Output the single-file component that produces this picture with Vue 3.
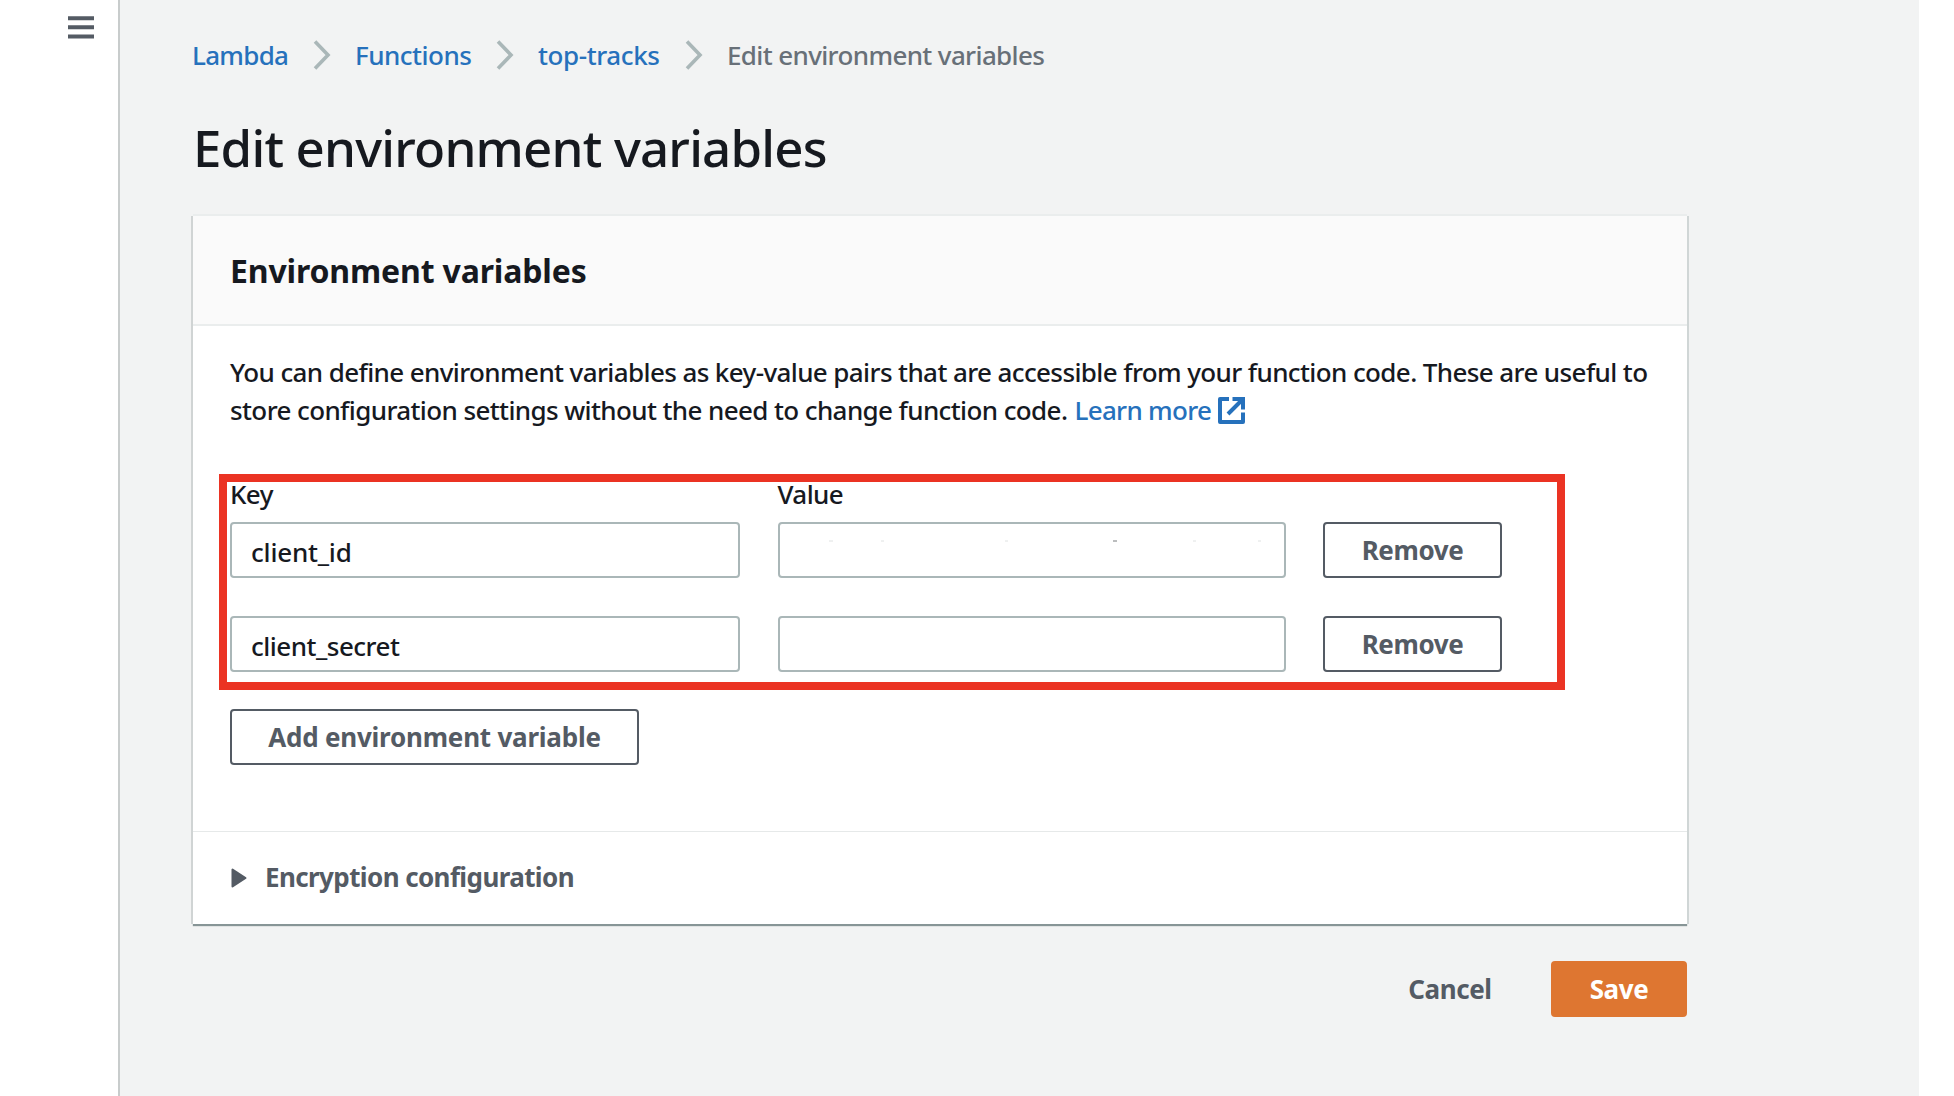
<script setup>
import { ref } from 'vue'

const crumbs = [
  { label: 'Lambda', width: 95, spacing: -0.7 },
  { label: 'Functions', width: 115, spacing: -0.5 },
  { label: 'top-tracks', width: 121, spacing: -0.4 },
]

const variables = ref([
  { key: 'client_id', value: '', spacing: -0.2 },
  { key: 'client_secret', value: '', spacing: -0.5 },
])
</script>

<template>
  <div class="page">
    <aside class="rail">
      <button class="menu" aria-label="Open navigation">
        <svg width="26" height="24" viewBox="0 0 26 24">
          <path d="M0 2.2h26M0 11.3h26M0 20.6h26" stroke="#545b64" stroke-width="4" />
        </svg>
      </button>
    </aside>

    <main class="content">
      <nav class="crumbs">
        <template v-for="crumb in crumbs" :key="crumb.label">
          <a class="crumb" :style="{ width: crumb.width + 'px', letterSpacing: crumb.spacing + 'px' }">{{ crumb.label }}</a>
          <svg class="chevron" width="18" height="32" viewBox="0 0 18 32">
            <path d="M2 2.5 15 16 2 29.5" fill="none" stroke="#aab7b8" stroke-width="3.6" />
          </svg>
        </template>
        <span class="crumb current">Edit environment variables</span>
      </nav>

      <h1>Edit environment variables</h1>

      <section class="card">
        <header class="card-head"><h2>Environment variables</h2></header>

        <div class="card-body">
          <p class="intro">
            You can define environment variables as key-value pairs that are accessible from your function code. These are useful to<br />
            store configuration settings without the need to change function code. <a class="learn">Learn more</a>
            <svg class="external" width="27" height="27" viewBox="0 0 27 27">
              <path d="M11 2H2v23h23v-9.5" fill="none" stroke="#2671bc" stroke-width="4" stroke-linejoin="round" />
              <path d="M14.5 2H25v10.5M24 3 10 17" fill="none" stroke="#2671bc" stroke-width="4" />
            </svg>
          </p>

          <div class="grid">
            <div class="outline"></div>
            <label>Key</label>
            <label>Value</label>
            <span></span>
            <template v-for="(item, i) in variables" :key="i">
              <input v-model="item.key" type="text" :style="{ letterSpacing: item.spacing + 'px' }" />
              <div class="field">
                <svg v-if="i === 0" width="504" height="52" viewBox="0 0 504 52">
                  <path d="M49 17h4M101 17h3M225 17h3M413 17h3M478 17h3" stroke="#dfe2e2" stroke-width="1" />
                  <path d="M333 17h4" stroke="#8d9093" stroke-width="1.2" />
                </svg>
              </div>
              <button class="btn">Remove</button>
            </template>
          </div>

          <button class="btn add">Add environment variable</button>
        </div>

        <footer class="card-foot">
          <svg width="16" height="20" viewBox="0 0 16 20">
            <path d="M1.5 1.5v17L14.5 10z" fill="#545b64" stroke="#545b64" stroke-width="2" stroke-linejoin="round" />
          </svg>
          <span>Encryption configuration</span>
        </footer>
      </section>

      <div class="actions">
        <button class="btn cancel">Cancel</button>
        <button class="btn save">Save</button>
      </div>
    </main>
  </div>
</template>

<style>
body {
  margin: 0;
  background: #fff;
}
</style>

<style scoped>
.page,
.page * {
  box-sizing: border-box;
}
.page {
  display: flex;
  width: 1954px;
  height: 1096px;
  overflow: hidden;
  font: 500 26px/37.3px "Noto Sans", sans-serif;
  color: #16191f;
}
.rail {
  flex: none;
  width: 120px;
  border-right: 2px solid #c8cccc;
  padding: 16px 0 0 68px;
}
.menu {
  display: block;
  padding: 0;
  border: 0;
  background: none;
}
.menu svg {
  display: block;
}
.content {
  width: 1799px;
  height: 1096px;
  background: #f2f3f3;
  padding: 36px 232px 0 73px;
}
.crumbs {
  display: flex;
  align-items: center;
  height: 38px;
  white-space: nowrap;
}
.crumb {
  margin-left: -1px;
  padding-top: 1px;
  color: #2671bc;
}
.chevron {
  flex: none;
  margin: 0 25px 0 26px;
}
.current {
  color: #687078;
  letter-spacing: -0.63px;
}
h1 {
  margin: 42px 0 0;
  height: 62px;
  font-size: 51px;
  font-weight: 500;
  line-height: 62px;
  letter-spacing: -0.8px;
  white-space: nowrap;
}
.card {
  width: 1494px;
  height: 708px;
  margin-top: 38px;
  background: #fff;
  box-shadow: 0 -2px 0 #eaeded, -2px 0 0 #d0d4d4, 2px 0 0 #d0d6d6, 0 2px 1px #879596;
}
.card-head {
  height: 110px;
  padding-left: 37px;
  background: #fafafa;
  border-bottom: 2px solid #eaeded;
}
h2 {
  margin: 0;
  font-size: 32px;
  line-height: 110px;
  font-weight: 700;
  letter-spacing: -0.15px;
}
.card-body {
  height: 505px;
  padding: 28.3px 0 0 37px;
}
.intro {
  margin: 0;
  height: 74.7px;
  letter-spacing: -0.61px;
  white-space: nowrap;
}
.learn {
  margin-left: 1px;
  color: #2671bc;
  letter-spacing: -0.7px;
}
.external {
  vertical-align: -4px;
  margin-left: 7px;
}
.grid {
  position: relative;
  display: grid;
  grid-template-columns: 510px 508px 179px;
  grid-template-rows: 48px 94px 56px;
  column-gap: 37.5px;
  margin-top: 45px;
}
.grid label {
  height: 38px;
  padding-top: 2px;
  letter-spacing: -0.6px;
}
.outline {
  position: absolute;
  left: -11px;
  top: 0;
  width: 1346px;
  height: 216px;
  border: 8px solid #eb3323;
  pointer-events: none;
}
input,
.field {
  width: 100%;
  height: 56px;
  border: 2px solid #aab7b8;
  border-radius: 4px;
  background: #fff;
}
input {
  padding: 4px 18px 0 19px;
  font: inherit;
  color: inherit;
  outline: none;
}
.field svg {
  display: block;
}
.btn {
  height: 56px;
  padding: 0;
  border: 2px solid #545b64;
  border-radius: 4px;
  background: #fff;
  font: 700 26px/50px "Noto Sans", sans-serif;
  letter-spacing: -0.4px;
  color: #545b64;
  white-space: nowrap;
}
.add {
  display: block;
  width: 409px;
  margin-top: 37px;
  letter-spacing: -0.22px;
}
.card-foot {
  display: flex;
  align-items: center;
  height: 93px;
  border-top: 1px solid #e6e9e9;
  padding: 0 0 1px 38px;
  color: #545b64;
  font-weight: 700;
  letter-spacing: -0.6px;
}
.card-foot span {
  margin-left: 18px;
}
.actions {
  display: flex;
  justify-content: flex-end;
  width: 1494px;
  margin-top: 37px;
}
.cancel {
  width: 160px;
  margin-right: 21px;
  border-color: transparent;
  background: transparent;
}
.save {
  width: 136px;
  border-color: #de7631;
  background: #de7631;
  color: #fff;
}
</style>
